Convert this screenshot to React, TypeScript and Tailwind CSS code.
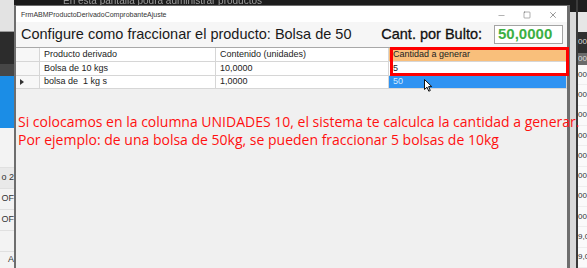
import { Minus, Square, X } from 'lucide-react'

const LeftStrip = () => {
  return (
    <div className="w-[14px] flex flex-col overflow-hidden text-[9px] text-[#333]">
      <div className="h-[32px] bg-[#e3e3e3] border-b border-[#9a9a9a]" />
      <div className="h-[33px] bg-[#2c2c2c]" />
      <div className="h-[12px] bg-[#464646]" />
      <div className="h-[53px] bg-[#1b8de6]" />
      <div className="flex-1 bg-[#f3f3f3] flex flex-col items-end">
        <div className="h-[40px] w-full border-b border-[#e0e0e0]" />
        <div className="h-[20px] w-full bg-[#e9e9e9] flex items-center justify-end whitespace-nowrap">o 2</div>
        <div className="h-[21px] w-full flex items-center justify-end whitespace-nowrap border-t border-[#e0e0e0]">OF</div>
        <div className="h-[21px] w-full flex items-center justify-end whitespace-nowrap border-t border-[#e0e0e0]">OF</div>
        <div className="h-[21px] w-full border-t border-[#e0e0e0]" />
        <div className="h-[17px] w-full flex items-center justify-end whitespace-nowrap border-t border-[#e0e0e0]">A</div>
      </div>
    </div>
  )
}

const RightStrip = () => {
  const rows = ['00', '00', '00', '00', '00', '00', '00', '00', '9,0', '9,0']
  return (
    <div className="w-[17px] flex">
      <div className="w-[6px] flex flex-col">
        <div className="h-[12px] bg-[#1e1e1e]" />
        <div className="flex-1 bg-[#d9d9d9]" />
      </div>
      <div className="w-[2px] bg-[#3a3a3a]" />
      <div className="flex-1 flex flex-col overflow-hidden text-[8px] whitespace-nowrap">
        <div className="h-[12px] bg-[#1e1e1e]" />
        <div className="h-[21px] bg-[#e6e6e6]" />
        <div className="h-[22px] bg-[#303030] text-[#ddd] flex items-center">00</div>
        <div className="h-[12px] bg-[#6b6b6b] text-[#ddd] flex items-center">00</div>
        {rows.map((r, i) => (
          <div key={i} className="h-[21px] bg-[#fafafa] text-[#333] flex items-center border-b border-[#eee]">{r}</div>
        ))}
      </div>
    </div>
  )
}

const Grid = () => {
  const cell = "border-r border-b border-[#d6d6d6] px-[4px] flex items-center text-[9px] text-[#222] whitespace-nowrap overflow-hidden"
  return (
    <div className="relative bg-white border-t border-[#a8a8a8]">
      <div className="grid grid-cols-[24px_176px_173px_178px] grid-rows-[14px_14px_13px]">
        <div className={`${cell} bg-[#f7f7f7]`} />
        <div className={cell}>Producto derivado</div>
        <div className={cell}>Contenido (unidades)</div>
        <div className={`${cell} bg-[#f9bf7b] text-[#5a4226]`}>Cantidad a generar</div>

        <div className={`${cell} bg-[#f7f7f7]`} />
        <div className={cell}>Bolsa de 10 kgs</div>
        <div className={cell}>10,0000</div>
        <div className={cell}>5</div>

        <div className={`${cell} bg-[#f7f7f7]`}>
          <svg width="4" height="6" viewBox="0 0 4 6"><polygon points="0,0 4,3 0,6" fill="#333" /></svg>
        </div>
        <div className={cell}>bolsa de&nbsp; 1 kg s</div>
        <div className={cell}>1,0000</div>
        <div className={`${cell} bg-[#2f93f2] text-[#d6ebff]`}>50</div>
      </div>
      <div className="absolute left-[374px] top-[-1px] w-[179px] h-[29px] border-[3px] border-[#ff0000]" />
      <svg className="absolute left-[408px] top-[31px]" width="9" height="13" viewBox="0 0 9 13">
        <path d="M0.5 0.5 L0.5 10.5 L3 8.2 L4.8 12.2 L6.3 11.5 L4.6 7.6 L7.8 7.6 Z" fill="#fff" stroke="#111" strokeWidth="1" strokeLinejoin="round" />
      </svg>
    </div>
  )
}

const Window = () => {
  return (
    <div className="absolute left-[14px] top-[5px] w-[556px] h-[270px] border-l-2 border-r-[3px] border-t border-[#6e6e6e] bg-[#f0f0f0] flex flex-col">
      <div className="h-[16px] bg-white flex items-center pl-[5px] pr-[1px] pt-[2px] text-[7px] text-[#333]">
        <span className="flex-1">FrmABMProductoDerivadoComprobanteAjuste</span>
        <div className="w-[26px] flex justify-center text-[#333]"><Minus size={9} strokeWidth={1} /></div>
        <div className="w-[26px] flex justify-center text-[#333]"><Square size={8} strokeWidth={1.2} /></div>
        <div className="w-[26px] flex justify-center text-[#333]"><X size={10} strokeWidth={1.2} /></div>
      </div>
      <div className="h-[25px] bg-[#f6f6f6] flex items-center pl-[5px] pr-[4px]">
        <span className="text-[14.5px] text-[#1a1a1a] whitespace-nowrap">Configure como fraccionar el producto: Bolsa de 50</span>
        <span className="ml-auto text-[14.5px] text-[#111] whitespace-nowrap [-webkit-text-stroke:0.3px_#111]">Cant. por Bulto:</span>
        <div className="ml-[12px] w-[69px] h-[19px] bg-white border border-[#a4a4a4] flex items-center pl-[3px] text-[15px] font-bold text-[#3cb043]">50,0000</div>
      </div>
      <Grid />
      <div className="mt-[24px] pl-[2px] text-[#ff1010] font-['Open_Sans',sans-serif] text-[14px] leading-[18px] whitespace-nowrap">
        <p>Si colocamos en la columna UNIDADES 10, el sistema te calculca la cantidad a generar.</p>
        <p>Por ejemplo: de una bolsa de 50kg, se pueden fraccionar 5 bolsas de 10kg</p>
      </div>
    </div>
  )
}

export default function App() {
  return (
    <div className="relative w-[587px] h-[268px] overflow-hidden bg-[#dcdcdc] font-['Liberation_Sans',Arial,sans-serif]">
      <div className="flex h-full">
        <LeftStrip />
        <div className="flex-1 flex flex-col">
          <div className="h-[6px] bg-[#1c1c1c] overflow-hidden pl-[49px] flex items-end">
            <span className="text-[10px] leading-[10px] text-[#9c9c9c] blur-[0.6px] whitespace-nowrap">En esta pantalla podrá administrar productos</span>
          </div>
        </div>
        <RightStrip />
      </div>
      <Window />
    </div>
  )
}
